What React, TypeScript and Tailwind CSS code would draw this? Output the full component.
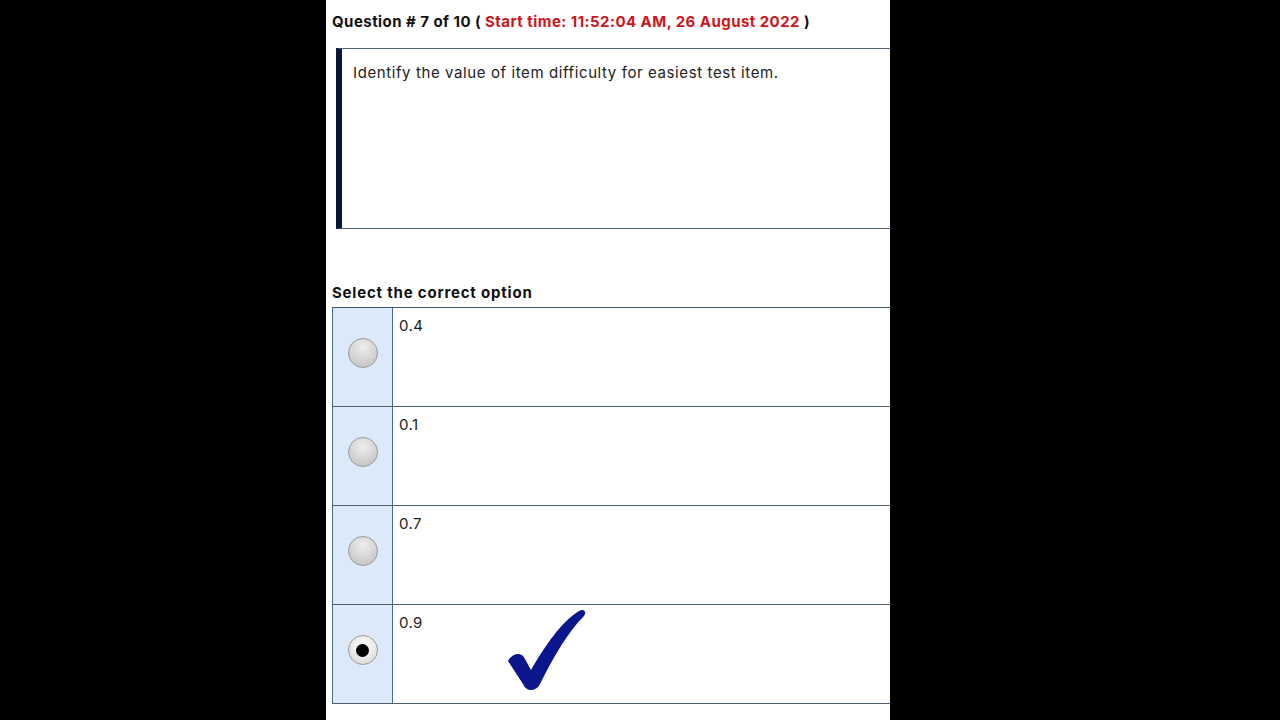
import React from "react";

const options = ["0.4", "0.1", "0.7", "0.9"];
const selected = 3;

function Radio({ checked }: { checked: boolean }) {
  if (checked) {
    return (
      <div className="w-[30px] h-[30px] rounded-full border border-[#9a9a9a] bg-[radial-gradient(circle_at_50%_35%,#ffffff,#d4d4d4)] flex items-center justify-center">
        <div className="w-[13px] h-[13px] rounded-full bg-black" />
      </div>
    );
  }
  return (
    <div className="w-[30px] h-[30px] rounded-full border border-[#999] bg-[radial-gradient(circle_at_50%_30%,#eeeeee,#bdbdbd)]" />
  );
}

function CheckMark() {
  return (
    <svg width="80" height="82" viewBox="0 0 80 82" className="absolute left-[114px] top-[3px]">
      <path
        d="M1 53 C6 44 15 44 18 51 L24 62 C38 38 54 14 72 3 C77 0 80 4 77 8 C61 24 47 48 33 76 C29 84 19 84 16 76 Z"
        fill="#0c168c"
      />
    </svg>
  );
}

export default function App() {
  return (
    <div className="w-[1280px] h-[720px] bg-black flex overflow-hidden pl-[326px]">
      <div
        className="w-[564px] h-full bg-white overflow-hidden pl-[6px] text-[#111]"
        style={{ fontFamily: "Inter, 'Noto Sans', sans-serif" }}
      >
        <div className="pt-[11px] h-[48px] text-[15px] font-bold tracking-[0.45px] whitespace-nowrap">
          Question # 7 of 10 ({" "}
          <span className="text-[#d0141c]">Start time: 11:52:04 AM, 26 August 2022</span> )
        </div>

        <div className="ml-[4px] w-[600px] h-[181px] border-t border-b border-[#50647a] border-l-[6px] border-l-[#0b1736] pl-[11px] pt-[13px] text-[15px] tracking-[0.6px] text-[#222]">
          Identify the value of item difficulty for easiest test item.
        </div>

        <div className="mt-[53px] text-[15px] font-bold h-[25px] tracking-[0.8px]">Select the correct option</div>

        <div className="w-[620px] border-t border-[#3f5a66]">
          {options.map((o, i) => (
            <div key={o} className="flex h-[99px] border-b border-[#4e6372]">
              <div className="w-[61px] shrink-0 bg-[#dce9f9] border-l border-r border-[#4a6a92] flex justify-center pt-[30px]">
                <Radio checked={i === selected} />
              </div>
              <div className="relative flex-1 pl-[6px] pt-[7px] text-[15px] tracking-[0.4px] text-[#222]">
                {o}
                {i === selected && <CheckMark />}
              </div>
            </div>
          ))}
        </div>
      </div>
    </div>
  );
}
